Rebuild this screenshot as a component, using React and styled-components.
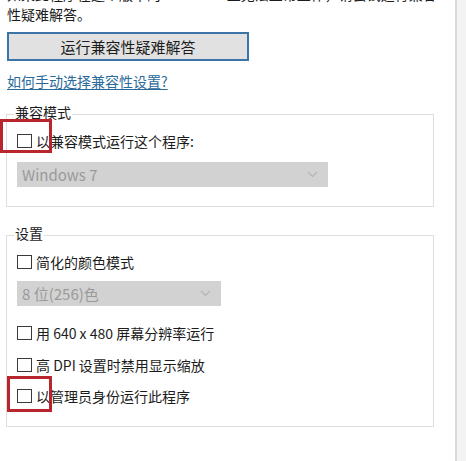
import React from 'react'
import styled, { createGlobalStyle } from 'styled-components'

const GlobalStyle = createGlobalStyle`
  html, body {
    margin: 0;
    padding: 0;
    background: #ffffff;
  }
  body {
    font-family: "Noto Sans CJK SC", "Noto Sans", sans-serif;
    color: #1c1c1c;
  }
`

function Checkbox({ label, top }) {
  return (
    <CheckRow $top={top}>
      <Box />
      <span>{label}</span>
    </CheckRow>
  )
}

function Combo({ value, width, top }) {
  return (
    <Select $top={top} style={{ width }}>
      <span>{value}</span>
      <svg width="11" height="7" viewBox="0 0 11 7">
        <path d="M1 1 L5.5 5.5 L10 1" fill="none" stroke="#b4b4b4" strokeWidth="1.2" />
      </svg>
    </Select>
  )
}

function App() {
  return (
    <Page>
      <GlobalStyle />
      <Content>
        <Intro>
          <Line>如果此程序在这个版本的 Windows 上无法正常工作，请尝试运行兼容</Line>
          <Line>性疑难解答。</Line>
        </Intro>
        <Button>运行兼容性疑难解答</Button>
        <Link>如何手动选择兼容性设置?</Link>

        <Group $top={13} $bottom={19}>
          <Legend>兼容模式</Legend>
          <Checkbox label="以兼容模式运行这个程序:" top={7} />
          <Combo value="Windows 7" width={311} top={12} />
        </Group>

        <Group $top={17} $bottom={21}>
          <Legend>设置</Legend>
          <Checkbox label="简化的颜色模式" top={7} />
          <Combo value="8 位(256)色" width={204} top={10} />
          <Checkbox label="用 640 x 480 屏幕分辨率运行" top={18} />
          <Checkbox label="高 DPI 设置时禁用显示缩放" top={14} />
          <Checkbox label="以管理员身份运行此程序" top={13} />
        </Group>
      </Content>
      <Scroll />

      <Mark $x={0} $y={119} $w={52} $h={34} />
      <Mark $x={7} $y={376} $w={45} $h={36} />
    </Page>
  )
}

const Page = styled.div`
  position: relative;
  width: 466px;
  height: 461px;
  display: flex;
  overflow: hidden;
  font-size: 14px;
`

const Content = styled.div`
  flex: 1;
  min-width: 0;
  padding-left: 7px;
  display: flex;
  flex-direction: column;
  align-items: flex-start;
`

const Intro = styled.div`
  margin-top: -16px;
  display: flex;
  flex-direction: column;
`

const Line = styled.div`
  height: 20px;
  line-height: 20px;
  white-space: nowrap;
`

const Button = styled.div`
  box-sizing: border-box;
  margin-top: 8px;
  width: 242px;
  height: 29px;
  display: flex;
  align-items: center;
  justify-content: center;
  background: #e1e1e1;
  border: 2px solid #3a74a8;
  font-size: 15px;
`

const Link = styled.div`
  margin-top: 11px;
  line-height: 18px;
  color: #2a6a9a;
  text-decoration: underline;
  text-underline-offset: 2px;
`

const Group = styled.fieldset`
  box-sizing: border-box;
  margin: ${p => p.$top}px 0 0 -1px;
  width: 428px;
  padding: 0 10px ${p => p.$bottom}px 10px;
  border: 1px solid #dedede;
  display: flex;
  flex-direction: column;
  align-items: flex-start;
  min-width: 0;
`

const Legend = styled.legend`
  padding: 0 1px 4px 1px;
  margin-left: -3px;
  line-height: 18px;
`

const CheckRow = styled.div`
  margin-top: ${p => p.$top}px;
  display: flex;
  align-items: center;
  gap: 4px;
  line-height: 18px;
  height: 18px;
`

const Box = styled.div`
  box-sizing: border-box;
  width: 15px;
  height: 14px;
  border: 1px solid #3a3a3a;
  background: #ffffff;
`

const Select = styled.div`
  box-sizing: border-box;
  margin-top: ${p => p.$top}px;
  height: 25px;
  padding: 0 10px 0 5px;
  display: flex;
  align-items: center;
  justify-content: space-between;
  background: #d2d2d2;
  color: #9a9a9a;
  font-size: 15px;
`

const Scroll = styled.div`
  width: 9px;
  border-left: 2px solid #dadada;
  background: #f3f3f3;
`

const Mark = styled.div`
  position: absolute;
  left: ${p => p.$x}px;
  top: ${p => p.$y}px;
  width: ${p => p.$w}px;
  height: ${p => p.$h}px;
  box-sizing: border-box;
  border: 3px solid #b8252d;
`

export default App
